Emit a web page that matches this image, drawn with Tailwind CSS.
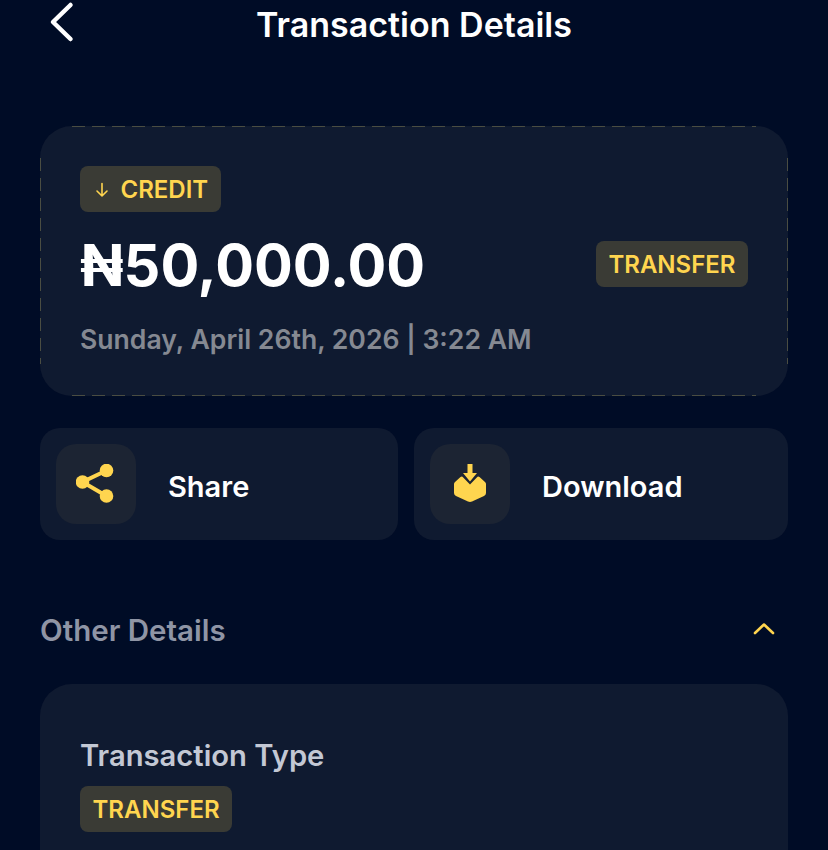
<!DOCTYPE html>
<html lang="en">

<head>
    <meta charset="UTF-8">
    <meta name="viewport" content="width=device-width, initial-scale=1.0">
    <title>Transaction Details</title>
    <script src="https://cdn.jsdelivr.net/npm/@tailwindcss/browser@4"></script>
</head>

<body class="h-[850px] overflow-hidden bg-[#000c26] font-['Inter',sans-serif] text-white">
    <header class="relative h-[50px] flex justify-center items-center">
        <svg class="absolute left-[46px] top-[-1px] w-[32px] h-[44px]" viewBox="0 0 32 44" fill="none" stroke="#fff" stroke-width="4.5" stroke-linecap="round" stroke-linejoin="round">
            <path d="M24.5 6 L7 23 L24.5 40" />
        </svg>
        <h1 class="text-[34px] leading-[48px] font-semibold">Transaction Details</h1>
    </header>

    <main class="px-10 pt-[76px]">
        <!-- summary card -->
        <section class="relative h-[270px] rounded-[32px] bg-[#0f1a30] pt-10 px-10">
            <svg class="absolute inset-0 w-[748px] h-[270px]" viewBox="0 0 748 270" fill="none" stroke="#4a4d42" stroke-width="1" stroke-dasharray="13 7">
                <path d="M32 0.500 H716 M32 269.500 H716 M0.500 32 V238 M747.500 32 V238" />
            </svg>
            <span class="inline-flex items-center h-[46px] pl-3 pr-[13px] pt-[1px] rounded-lg bg-[#3a3b35] text-[#ffd54f] text-[24px] font-semibold">
                <svg class="w-[18px] h-[18px] mr-[9.500px] ml-[1px]" viewBox="0 0 18 18" fill="none" stroke="#ffd54f" stroke-width="1.600" stroke-linecap="round" stroke-linejoin="round">
                    <path d="M9 2.500 V15 M4 10 L9 15 L14 10" />
                </svg>
                CREDIT
            </span>
            <div class="flex justify-between items-center mt-[10px]">
                <span class="text-[57.600px] leading-[86px] font-bold">₦50,000.00</span>
                <span class="h-[46px] px-[12.500px] pt-[1px] mb-[2px] flex items-center rounded-lg bg-[#3a3b35] text-[#ffd54f] text-[24px] font-semibold">TRANSFER</span>
            </div>
            <p class="mt-[11px] text-[26.600px] leading-[40px] font-semibold text-[#858992]">Sunday, April 26th, 2026 | 3:22 AM</p>
        </section>

        <!-- actions -->
        <div class="flex gap-4 mt-8">
            <button class="w-[358px] h-[112px] flex items-center p-4 rounded-[20px] bg-[#0f1a30]">
                <span class="w-20 h-20 flex justify-center items-center rounded-[20px] bg-[#1c2433]">
                    <svg class="w-[40px] h-[40px]" viewBox="0 0 40 40" fill="none">
                        <path d="M30.500 6.500 L6.500 18 L30.500 32" stroke="#ffd54f" stroke-width="4" />
                        <circle cx="30.500" cy="6.500" r="6.800" fill="#ffd54f" />
                        <circle cx="6.500" cy="18" r="6.800" fill="#ffd54f" />
                        <circle cx="30.500" cy="32" r="6.800" fill="#ffd54f" />
                    </svg>
                </span>
                <span class="ml-8 pt-[6px] text-[29px] leading-[40px] font-semibold">Share</span>
            </button>
            <button class="flex-1 h-[112px] flex items-center p-4 rounded-[20px] bg-[#0f1a30]">
                <span class="w-20 h-20 flex justify-center items-center rounded-[20px] bg-[#1c2433]">
                    <svg class="w-[40px] h-[40px]" viewBox="0 0 40 40" fill="#ffd54f">
                        <path d="M4 20 Q4 19 5 18 L10.500 13 Q11.500 12.300 12.500 12.700 L20 20.500 L27.500 12.700 Q28.500 12.300 29.500 13 L35 18 Q36 19 36 20 V29 Q36 31 34 32 L22 37.500 Q20 38.300 18 37.500 L6 32 Q4 31 4 29 Z" />
                        <path d="M17.500 0 H22.500 V9 H27 L20 17.500 L13 9 H17.500 Z" />
                    </svg>
                </span>
                <span class="ml-8 pt-[6px] text-[29px] leading-[40px] font-semibold">Download</span>
            </button>
        </div>

        <!-- other details -->
        <div class="flex justify-between items-center mt-[72px]">
            <h2 class="text-[29.500px] leading-[38px] -mt-[1px] mb-[1px] font-semibold text-[#8f95a5]">Other Details</h2>
            <svg class="w-[24px] h-[14px] mr-[12px] mb-[6px]" viewBox="0 0 24 14" fill="none" stroke="#ffd54f" stroke-width="2.600" stroke-linecap="round" stroke-linejoin="round">
                <path d="M3 12 L12 3.500 L21 12" />
            </svg>
        </div>

        <section class="mt-[34px] h-[166px] rounded-t-[32px] bg-[#0f1a30] pt-10 px-10">
            <p class="text-[29.200px] leading-[62px] pt-[1px] -mb-[1px] font-semibold text-[#c3c8d4]">Transaction Type</p>
            <span class="inline-flex items-center h-[46px] px-[12.500px] pt-[1px] rounded-lg bg-[#3a3b35] text-[#ffd54f] text-[24px] font-semibold">TRANSFER</span>
        </section>
    </main>
</body>

</html>
